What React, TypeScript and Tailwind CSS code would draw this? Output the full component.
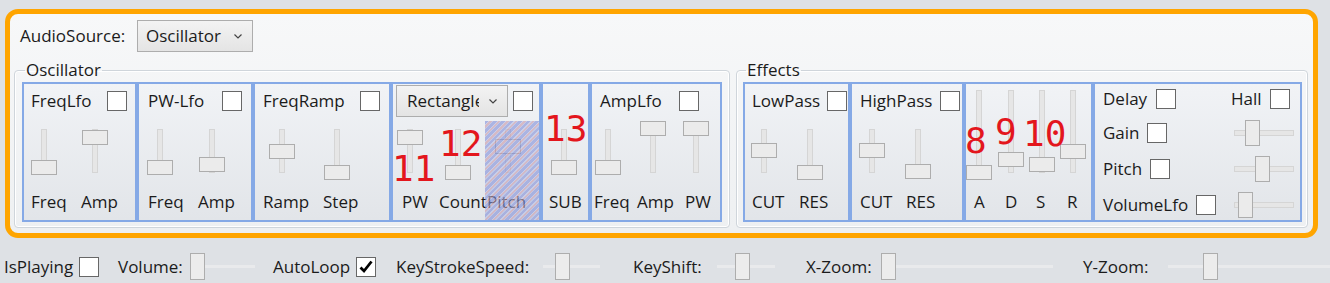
import React from 'react';

const Check: React.FC<{ checked?: boolean }> = ({ checked }) => (
  <span className="flex h-[20px] w-[20px] shrink-0 items-center justify-center border border-[#676767] bg-white">
    {checked && (
      <svg width="16" height="16" viewBox="0 0 16 16">
        <path d="M2.5 8.5 L6 12 L13.5 2.5" fill="none" stroke="#000" strokeWidth="2.8" />
      </svg>
    )}
  </span>
);

const Chevron = () => (
  <svg width="8" height="5" viewBox="0 0 8 5" className="shrink-0">
    <path d="M0.5 0.5 L4 4 L7.5 0.5" fill="none" stroke="#444" strokeWidth="1.2" />
  </svg>
);

// vertical slider, thumb offset in px from slider top
const VSlider: React.FC<{ top: number; tall?: boolean }> = ({ top, tall }) => (
  <div className={tall ? 'relative h-[98px] w-[26px]' : 'relative h-[62px] w-[26px]'}>
    <div
      className={
        (tall ? 'top-[6px] ' : 'top-[9px] ') +
        'absolute bottom-[9px] left-[10px] w-[6px] border border-[#d5d5d5] bg-[#e6e6e6]'
      }
    />
    <div className="absolute left-0 h-[15px] w-[26px] border border-[#adadad] bg-[#ebebeb]" style={{ top }} />
  </div>
);

const HSlider: React.FC<{ left: number }> = ({ left }) => (
  <div className="relative h-[26px] w-[60px]">
    <div className="absolute left-0 right-0 top-[10px] h-[6px] border border-[#d5d5d5] bg-[#e6e6e6]" />
    <div className="absolute top-0 h-[26px] w-[15px] border border-[#adadad] bg-[#ebebeb]" style={{ left }} />
  </div>
);

const BarSlider: React.FC<{ w: string; left: number }> = ({ w, left }) => (
  <div className={`relative h-[27px] shrink-0 ${w}`}>
    <div className="absolute left-0 right-0 top-[12px] h-[3px] bg-[#e9eaec]" />
    <div className="absolute top-0 h-[27px] w-[15px] border border-[#adadad] bg-[#ececec]" style={{ left }} />
  </div>
);

const Panel: React.FC<{ className: string; children?: React.ReactNode }> = ({ className, children }) => (
  <div className={`flex h-[140px] shrink-0 flex-col border-2 border-[#85a9e6] bg-linear-to-b from-[#f1f3f6] to-[#e2e5e9] ${className}`}>
    {children}
  </div>
);

const Head: React.FC<{ label?: string; className?: string; labelW?: string }> = ({ label, className = '', labelW = '' }) => (
  <div className={`flex h-[36px] shrink-0 items-start pt-[7px] ${className}`}>
    {label && (
      <>
        <span className={`h-[20px] whitespace-nowrap leading-[20px] ${labelW}`}>{label}</span>
        <Check />
      </>
    )}
  </div>
);

const Col: React.FC<{
  label: string;
  top: number;
  tall?: boolean;
  className?: string;
  sClass?: string;
  lClass?: string;
}> = ({ label, top, tall, className = '', sClass = '', lClass = '' }) => (
  <div className={`flex shrink-0 flex-col items-start ${className}`}>
    <div className={sClass}>
      <VSlider top={top} tall={tall} />
    </div>
    <span className={`mt-[10px] h-[20px] whitespace-nowrap leading-[20px] ${lClass}`}>{label}</span>
  </div>
);

const Combo: React.FC<{ text: string; className: string; textClass: string }> = ({ text, className, textClass }) => (
  <div
    className={`flex h-[32px] shrink-0 items-center justify-between border border-[#adadad] bg-linear-to-b from-[#f3f3f3] to-[#e4e4e4] pr-[10px] ${className}`}
  >
    <span className={`whitespace-nowrap leading-[20px] ${textClass}`}>{text}</span>
    <Chevron />
  </div>
);

const Num: React.FC<{ n: string; className: string }> = ({ n, className }) => (
  <span
    className={`absolute font-['DejaVu_Sans_Mono',monospace] text-[36px] leading-[36px] text-[#e3161d] ${className}`}
  >
    {n}
  </span>
);

const App: React.FC = () => {
  return (
    <div className="relative h-[283px] w-[1330px] overflow-hidden bg-[#dee1e5] font-['Open_Sans',sans-serif] text-[17px] text-[#1b1b1b]">
      <div className="ml-[5px] mt-[9px] h-[229px] w-[1313px] rounded-[13px] border-[5px] border-[#ffa500] bg-linear-to-b from-[#f7f8f9] to-[#eef0f2] px-[4px] pt-[6px]">
        <div className="flex h-[32px] items-center pl-[6px]">
          <span className="w-[117px] leading-[20px]">AudioSource:</span>
          <Combo text="Oscillator" className="w-[116px]" textClass="pl-[8px]" />
        </div>

        <div className="mt-[8px] flex gap-[6px]">
          <fieldset className="rounded-[4px] border border-[#cfd5db] px-[7px] pb-[5px] pt-[2px] shadow-[inset_0_0_0_1px_#ffffff]">
            <legend className="ml-[3px] px-[1px] leading-[20px]">Oscillator</legend>
            <div className="flex">
              <Panel className="w-[115px]">
                <Head label="FreqLfo" className="pl-[7px]" labelW="w-[76px]" />
                <div className="flex pl-[7px]">
                  <Col label="Freq" top={40} className="w-[50px]" />
                  <Col label="Amp" top={10} sClass="ml-[1px]" />
                </div>
              </Panel>
              <Panel className="w-[116px]">
                <Head label="PW-Lfo" className="pl-[9px]" labelW="w-[74px]" />
                <div className="flex pl-[8px]">
                  <Col label="Freq" top={40} className="w-[51px]" lClass="ml-[1px]" />
                  <Col label="Amp" top={37} sClass="ml-[1px]" />
                </div>
              </Panel>
              <Panel className="w-[138px]">
                <Head label="FreqRamp" className="pl-[8px]" labelW="w-[97px]" />
                <div className="flex pl-[8px]">
                  <Col label="Ramp" top={24} className="w-[60px]" sClass="ml-[6px]" />
                  <Col label="Step" top={45} sClass="ml-[1px]" />
                </div>
              </Panel>
              <Panel className="w-[150px]">
                <div className="flex h-[36px] shrink-0 items-start pl-[3px] pt-[1px]">
                  <Combo text="Rectangle" className="w-[112px]" textClass="w-[82px] overflow-hidden pl-[10px]" />
                  <span className="ml-[5px] mt-[6px]">
                    <Check />
                  </span>
                </div>
                <div className="flex flex-1 pl-[4px]">
                  <Col label="PW" top={10} className="w-[42px]" lClass="ml-[5px]" />
                  <Col label="Count" top={45} className="w-[46px]" sClass="ml-[6px]" />
                  <div className="relative w-[54px]">
                    <Col label="Pitch" top={19} className="h-full" sClass="ml-[10px]" lClass="ml-[2px]" />
                    <div className="absolute inset-0 top-[1px] bg-[repeating-linear-gradient(135deg,#8390da_0px,#8390da_2.5px,#b7bde2_2.5px,#b7bde2_3.5px,#c99aab_3.5px,#c99aab_5px,#aab3df_5px,#aab3df_6px)] opacity-[0.62]" />
                  </div>
                </div>
              </Panel>
              <Panel className="w-[49px]">
                <Head />
                <div className="flex pl-[6px]">
                  <Col label="SUB" top={40} sClass="ml-[2px]" />
                </div>
              </Panel>
              <Panel className="w-[132px]">
                <Head label="AmpLfo" className="pl-[8px]" labelW="w-[79px]" />
                <div className="flex pl-[2px]">
                  <Col label="Freq" top={40} className="w-[43px]" sClass="ml-[1px]" />
                  <Col label="Amp" top={1} className="w-[46px]" sClass="ml-[3px]" />
                  <Col label="PW" top={1} lClass="ml-[2px]" />
                </div>
              </Panel>
            </div>
          </fieldset>

          <fieldset className="rounded-[4px] border border-[#cfd5db] pb-[5px] pl-[6px] pr-[5px] pt-[2px] shadow-[inset_0_0_0_1px_#ffffff]">
            <legend className="ml-[3px] px-[1px] leading-[20px]">Effects</legend>
            <div className="flex">
              <Panel className="w-[107px]">
                <Head label="LowPass" className="pl-[7px]" labelW="w-[75px]" />
                <div className="flex pl-[6px]">
                  <Col label="CUT" top={23} className="w-[46px]" lClass="ml-[1px]" />
                  <Col label="RES" top={45} lClass="ml-[2px]" />
                </div>
              </Panel>
              <Panel className="w-[114px]">
                <Head label="HighPass" className="pl-[8px]" labelW="w-[80px]" />
                <div className="flex pl-[7px]">
                  <Col label="CUT" top={23} className="w-[46px]" lClass="ml-[1px]" />
                  <Col label="RES" top={44} lClass="ml-[1px]" />
                </div>
              </Panel>
              <Panel className="w-[129px]">
                <div className="flex">
                  <Col label="A" top={81} tall className="w-[32px]" lClass="ml-[8px]" />
                  <Col label="D" top={68} tall className="w-[31px]" lClass="ml-[7px]" />
                  <Col label="S" top={73} tall className="w-[31px]" lClass="ml-[7px]" />
                  <Col label="R" top={60} tall lClass="ml-[7px]" />
                </div>
              </Panel>
              <Panel className="w-[209px]">
                <div className="flex flex-col pl-[8px] pr-[6px]">
                  <div className="mt-[2px] flex h-[26px] items-center">
                    <span className="w-[53px] whitespace-nowrap">Delay</span>
                    <Check />
                    <span className="ml-auto w-[39px] whitespace-nowrap">Hall</span>
                    <span className="mr-[4px]">
                      <Check />
                    </span>
                  </div>
                  <div className="mt-[8px] flex h-[26px] items-center">
                    <span className="w-[44px] whitespace-nowrap">Gain</span>
                    <Check />
                    <span className="ml-auto">
                      <HSlider left={11} />
                    </span>
                  </div>
                  <div className="mt-[10px] flex h-[26px] items-center">
                    <span className="w-[47px] whitespace-nowrap">Pitch</span>
                    <Check />
                    <span className="ml-auto">
                      <HSlider left={21} />
                    </span>
                  </div>
                  <div className="mt-[10px] flex h-[26px] items-center">
                    <span className="w-[93px] whitespace-nowrap">VolumeLfo</span>
                    <Check />
                    <span className="ml-auto">
                      <HSlider left={4} />
                    </span>
                  </div>
                </div>
              </Panel>
            </div>
          </fieldset>
        </div>
      </div>

      <div className="mt-[15px] flex h-[27px] items-center pl-[4px]">
        <span className="w-[75px] shrink-0 whitespace-nowrap">IsPlaying</span>
        <Check />
        <span className="ml-[19px] w-[72px] shrink-0 whitespace-nowrap">Volume:</span>
        <BarSlider w="w-[65px]" left={0} />
        <span className="ml-[18px] w-[83px] shrink-0 whitespace-nowrap">AutoLoop</span>
        <Check checked />
        <span className="ml-[20px] w-[147px] shrink-0 whitespace-nowrap">KeyStrokeSpeed:</span>
        <BarSlider w="w-[57px]" left={12} />
        <span className="ml-[33px] w-[84px] shrink-0 whitespace-nowrap">KeyShift:</span>
        <BarSlider w="w-[58px]" left={18} />
        <span className="ml-[31px] w-[75px] shrink-0 whitespace-nowrap">X-Zoom:</span>
        <BarSlider w="w-[172px]" left={0} />
        <span className="ml-[30px] w-[85px] shrink-0 whitespace-nowrap">Y-Zoom:</span>
        <BarSlider w="w-[162px]" left={35} />
      </div>

      <Num n="11" className="left-[392px] top-[151px]" />
      <Num n="12" className="left-[439px] top-[126px]" />
      <Num n="13" className="left-[544px] top-[111px]" />
      <Num n="8" className="left-[965px] top-[123px]" />
      <Num n="9" className="left-[995px] top-[114px]" />
      <Num n="10" className="left-[1023px] top-[116px]" />
    </div>
  );
};

export default App;
